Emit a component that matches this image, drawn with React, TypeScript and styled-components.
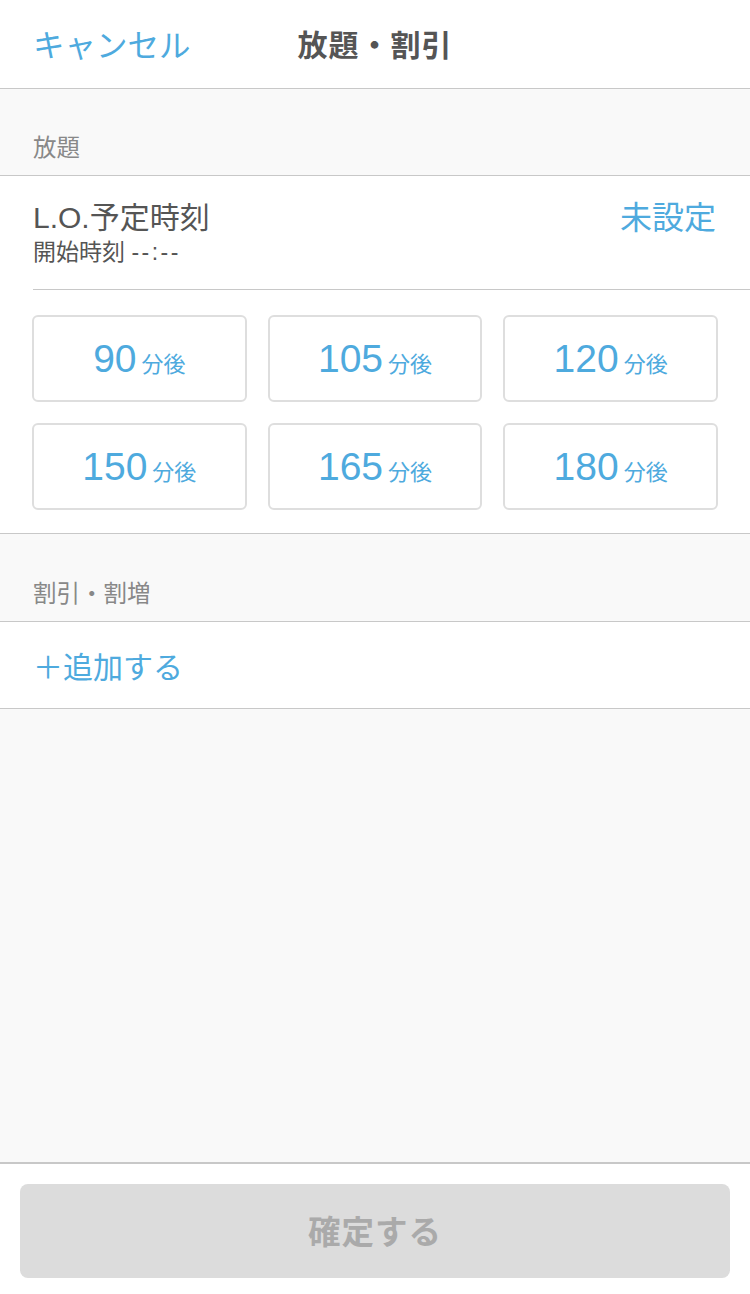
import styled, { createGlobalStyle } from 'styled-components'

const BLUE = '#4eaade'
const LINE = '#c8c8c8'

const GlobalStyle = createGlobalStyle`
  body {
    margin: 0;
    background: #f9f9f9;
    font-family: 'Liberation Sans', 'Noto Sans CJK JP', sans-serif;
    -webkit-font-smoothing: antialiased;
  }
`

const Screen = styled.div`
  display: flex;
  flex-direction: column;
  min-height: 1294px;
  background: #f9f9f9;
`

const Header = styled.header`
  display: grid;
  grid-template-columns: 1fr auto 1fr;
  align-items: center;
  height: 89px;
  padding-bottom: 3px;
  box-sizing: border-box;
  background: #fff;
  border-bottom: 1px solid ${LINE};
`

const CancelLink = styled.a`
  padding-left: 33px;
  font-size: 31.5px;
  color: ${BLUE};
  cursor: pointer;
`

const Title = styled.h1`
  margin: 0;
  font-size: 30px;
  font-weight: bold;
  color: #555;
  letter-spacing: 1px;
`

const SectionLabel = styled.div<{ $height: number }>`
  display: flex;
  align-items: flex-end;
  height: ${({ $height }) => $height}px;
  padding: 0 0 12px 33px;
  box-sizing: border-box;
  font-size: 23.5px;
  color: #888;
  border-bottom: 1px solid ${LINE};
`

const Card = styled.section`
  background: #fff;
  border-bottom: 1px solid ${LINE};
`

const LoRow = styled.div`
  display: flex;
  justify-content: space-between;
  align-items: flex-start;
  margin-left: 33px;
  padding: 23px 34px 22px 0;
  border-bottom: 1px solid ${LINE};
`

const LoText = styled.div`
  display: flex;
  flex-direction: column;
`

const LoTitle = styled.div`
  font-size: 30px;
  line-height: 38px;
  color: #555;
`

const LoSub = styled.div`
  font-size: 23px;
  line-height: 30px;
  color: #555;
`

const Dashes = styled.span`
  letter-spacing: 2.5px;
`

const LoValue = styled.div`
  font-size: 32px;
  line-height: 38px;
  color: ${BLUE};
`

const PresetGrid = styled.div`
  display: grid;
  grid-template-columns: repeat(3, 1fr);
  gap: 21px 21px;
  padding: 25px 32px 23px 32px;
`

const PresetButton = styled.button`
  display: flex;
  justify-content: center;
  align-items: baseline;
  gap: 5px;
  height: 87px;
  padding-top: 22px;
  box-sizing: border-box;
  background: #fff;
  border: 2px solid #dedede;
  border-radius: 6px;
  color: ${BLUE};
  font-family: inherit;
  cursor: pointer;
`

const Minutes = styled.span`
  font-size: 39px;
  line-height: 1;
`

const Unit = styled.span`
  font-size: 22px;
`

const AddRow = styled.div`
  display: flex;
  align-items: center;
  height: 86px;
  padding-left: 33px;
  background: #fff;
  border-bottom: 1px solid ${LINE};
  font-size: 30px;
  color: ${BLUE};
`

const Filler = styled.div`
  flex: 1;
`

const Footer = styled.footer`
  padding: 20px 20px 16px;
  background: #fff;
  border-top: 2px solid ${LINE};
`

const ConfirmButton = styled.button`
  width: 100%;
  height: 94px;
  padding-bottom: 4px;
  border: none;
  border-radius: 8px;
  background: #dcdcdc;
  color: #aaa;
  font-family: inherit;
  font-size: 32.5px;
  font-weight: bold;
  letter-spacing: 1px;
`

const PRESETS = [90, 105, 120, 150, 165, 180]

export default function App() {
  return (
    <Screen>
      <GlobalStyle />
      <Header>
        <CancelLink>キャンセル</CancelLink>
        <Title>放題・割引</Title>
        <div />
      </Header>

      <SectionLabel $height={87}>放題</SectionLabel>
      <Card>
        <LoRow>
          <LoText>
            <LoTitle>L.O.予定時刻</LoTitle>
            <LoSub>
              開始時刻 <Dashes>--:--</Dashes>
            </LoSub>
          </LoText>
          <LoValue>未設定</LoValue>
        </LoRow>
        <PresetGrid>
          {PRESETS.map((m) => (
            <PresetButton key={m} type="button">
              <Minutes>{m}</Minutes>
              <Unit>分後</Unit>
            </PresetButton>
          ))}
        </PresetGrid>
      </Card>

      <SectionLabel $height={88}>割引・割増</SectionLabel>
      <AddRow>＋追加する</AddRow>

      <Filler />

      <Footer>
        <ConfirmButton type="button" disabled>
          確定する
        </ConfirmButton>
      </Footer>
    </Screen>
  )
}
